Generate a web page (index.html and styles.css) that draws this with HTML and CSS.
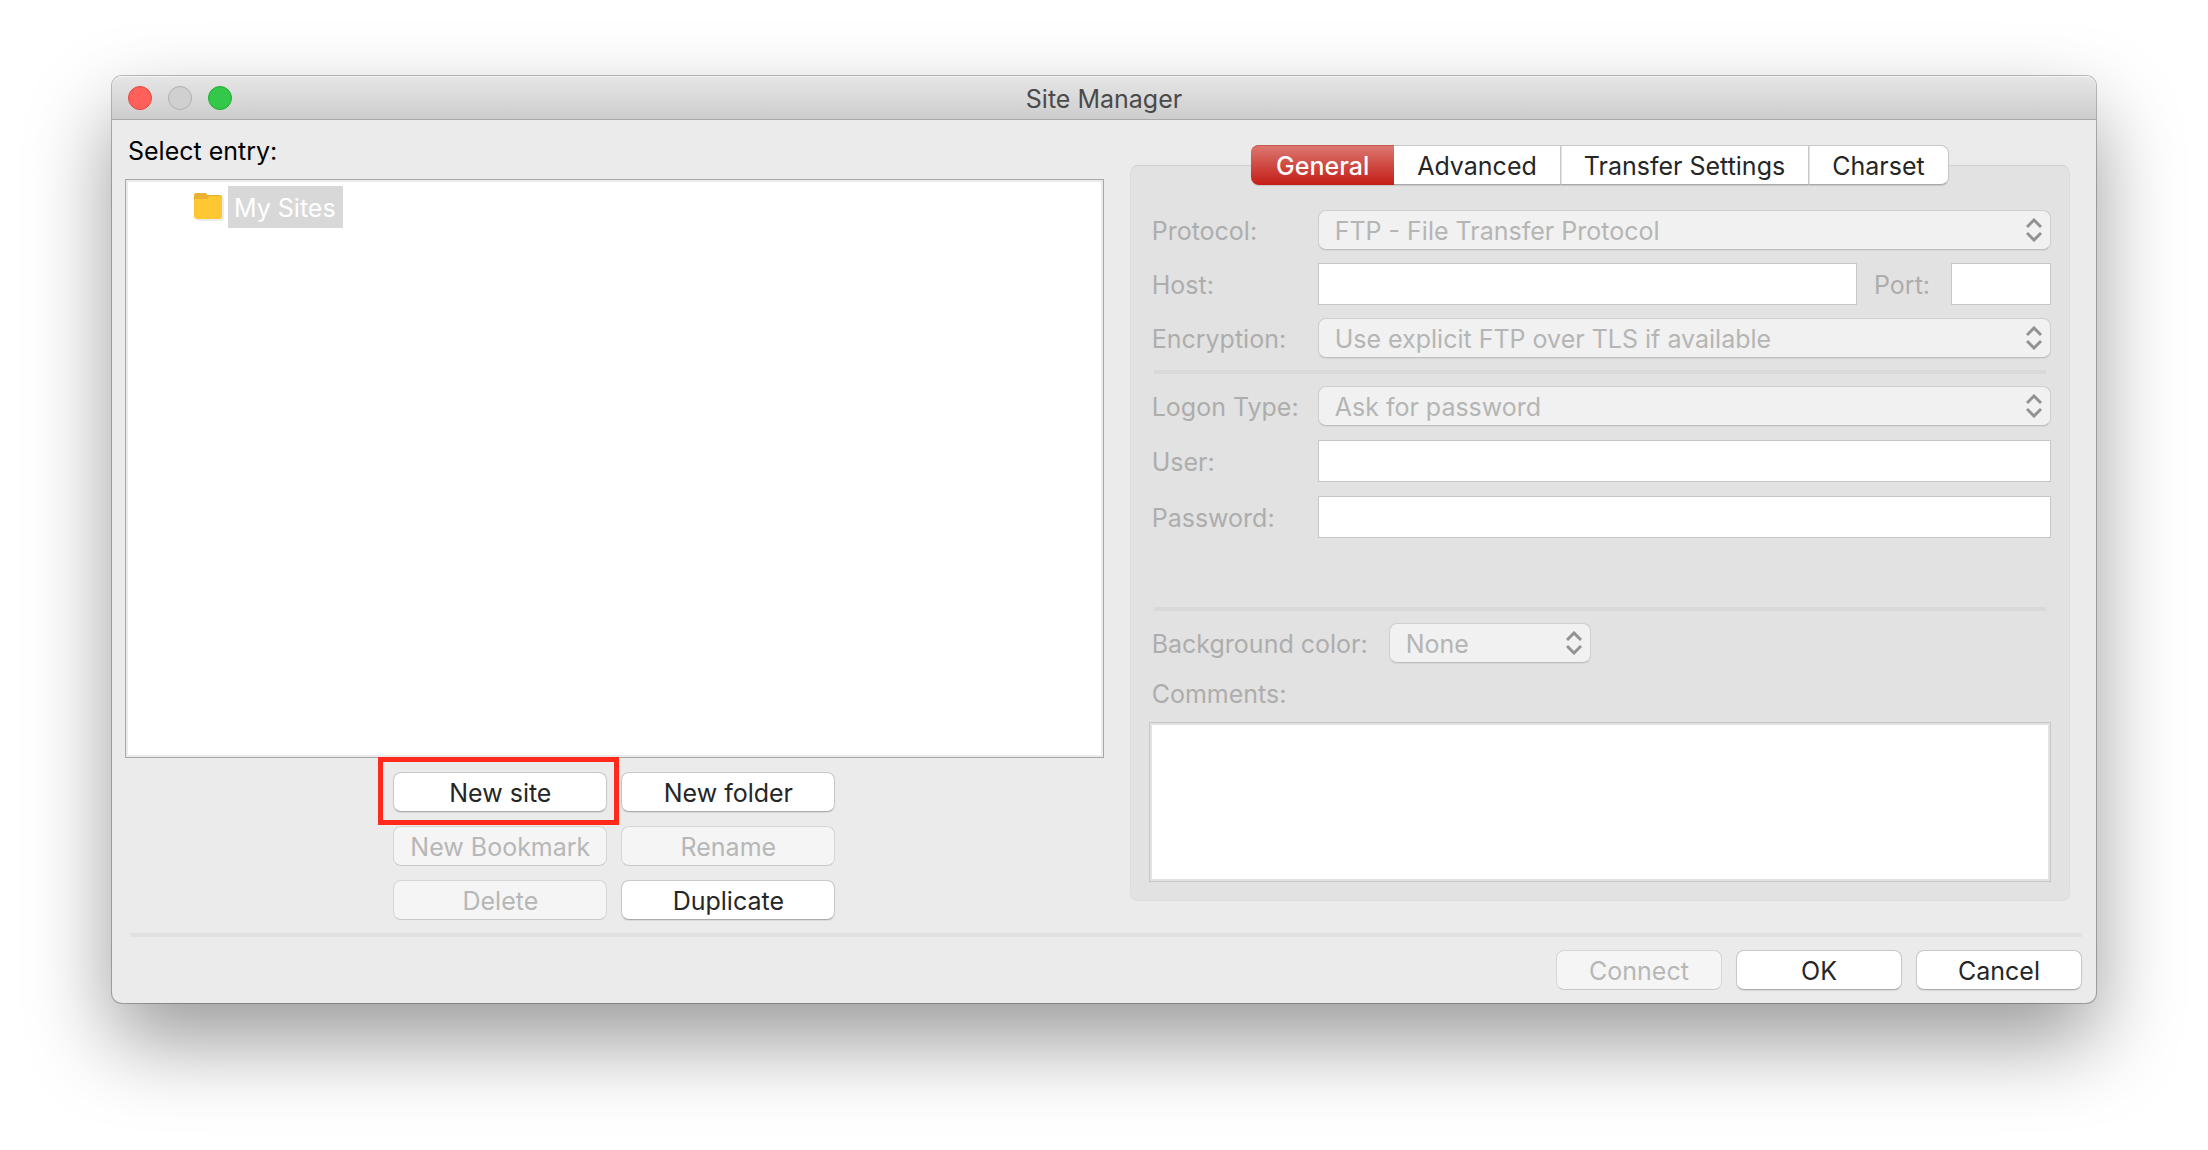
FILE: index.html
```html
<!DOCTYPE html>
<html lang="en">

<head>
    <meta charset="utf-8" />
    <title>Site Manager</title>
    <link rel="stylesheet" href="styles.css">
</head>

<body>
    <div class="window">
        <header class="titlebar">
            <div class="lights">
                <button type="button" class="light close" aria-label="Close"></button>
                <button type="button" class="light minimize" aria-label="Minimize" disabled></button>
                <button type="button" class="light zoom" aria-label="Zoom"></button>
            </div>
            <h1>Site Manager</h1>
        </header>

        <main class="content">
            <section class="entries">
                <h2 id="entries-label">Select entry:</h2>
                <ul class="tree" aria-labelledby="entries-label">
                    <li>
                        <svg class="folder" width="30" height="28" viewBox="0 0 30 28" aria-hidden="true">
                            <path d="M3 4h26a1 1 0 0 1 1 1v20a3 3 0 0 1-3 3H4a2 2 0 0 1-2-2z" fill="#ececec" />
                            <path d="M0 2a2 2 0 0 1 2-2h9a2 2 0 0 1 2 2h13a2 2 0 0 1 2 2v8H0z" fill="#e9b12f" />
                            <path d="M0 8a2 2 0 0 1 2-2h11l3-3h10a2 2 0 0 1 2 2v18a3 3 0 0 1-3 3H3a3 3 0 0 1-3-3z" fill="#ffc832" />
                        </svg>
                        <span class="selected">My Sites</span>
                    </li>
                </ul>
                <div class="actions">
                    <div class="marked">
                        <button type="button" class="btn">New site</button>
                    </div>
                    <button type="button" class="btn">New folder</button>
                    <button type="button" class="btn" disabled>New Bookmark</button>
                    <button type="button" class="btn" disabled>Rename</button>
                    <button type="button" class="btn" disabled>Delete</button>
                    <button type="button" class="btn">Duplicate</button>
                </div>
            </section>

            <section class="settings">
                <div class="tabs" role="tablist">
                    <button type="button" class="tab active" role="tab" aria-selected="true">General</button>
                    <button type="button" class="tab" role="tab" aria-selected="false">Advanced</button>
                    <button type="button" class="tab" role="tab" aria-selected="false">Transfer Settings</button>
                    <button type="button" class="tab" role="tab" aria-selected="false">Charset</button>
                </div>

                <form class="panel">
                    <div class="group">
                        <div class="row">
                            <label for="protocol">Protocol:</label>
                            <div class="select">
                                <select id="protocol" disabled>
                                    <option>FTP - File Transfer Protocol</option>
                                </select>
                                <svg class="arrows" width="16" height="24" viewBox="0 0 16 24" aria-hidden="true">
                                    <path d="M1 9L8 2l7 7M1 15L8 22l7-7" />
                                </svg>
                            </div>
                        </div>
                        <div class="row">
                            <label for="host">Host:</label>
                            <input type="text" id="host" disabled>
                            <label for="port" class="port-label">Port:</label>
                            <input type="text" id="port" class="port" disabled>
                        </div>
                        <div class="row">
                            <label for="encryption">Encryption:</label>
                            <div class="select">
                                <select id="encryption" disabled>
                                    <option>Use explicit FTP over TLS if available</option>
                                </select>
                                <svg class="arrows" width="16" height="24" viewBox="0 0 16 24" aria-hidden="true">
                                    <path d="M1 9L8 2l7 7M1 15L8 22l7-7" />
                                </svg>
                            </div>
                        </div>
                    </div>

                    <hr>

                    <div class="group logon">
                        <div class="row">
                            <label for="logon">Logon Type:</label>
                            <div class="select">
                                <select id="logon" disabled>
                                    <option>Ask for password</option>
                                </select>
                                <svg class="arrows" width="16" height="24" viewBox="0 0 16 24" aria-hidden="true">
                                    <path d="M1 9L8 2l7 7M1 15L8 22l7-7" />
                                </svg>
                            </div>
                        </div>
                        <div class="row">
                            <label for="user">User:</label>
                            <input type="text" id="user" disabled>
                        </div>
                        <div class="row">
                            <label for="password">Password:</label>
                            <input type="password" id="password" disabled>
                        </div>
                    </div>

                    <hr>

                    <div class="row color">
                        <label for="color">Background color:</label>
                        <div class="select">
                            <select id="color" disabled>
                                <option>None</option>
                            </select>
                            <svg class="arrows" width="16" height="24" viewBox="0 0 16 24" aria-hidden="true">
                                <path d="M1 9L8 2l7 7M1 15L8 22l7-7" />
                            </svg>
                        </div>
                    </div>
                    <div class="comments">
                        <label for="comments">Comments:</label>
                        <textarea id="comments" disabled></textarea>
                    </div>
                </form>
            </section>
        </main>

        <footer class="footer">
            <button type="button" class="btn" disabled>Connect</button>
            <button type="button" class="btn">OK</button>
            <button type="button" class="btn">Cancel</button>
        </footer>
    </div>
</body>

</html>
```
FILE: styles.css
```css
* {
    box-sizing: border-box;
    margin: 0;
    padding: 0;
}

body {
    min-height: 100vh;
    padding: 76px 112px;
    background: #fff;
    color: #000;
    font-family: Inter, "Liberation Sans", sans-serif;
    font-size: 25px;
    line-height: 30px;
}

button,
input,
select,
textarea {
    font: inherit;
}

h1,
h2 {
    font-size: 25px;
    font-weight: 400;
}

/* window */

.window {
    border-radius: 10px;
    background: #ebebeb;
    box-shadow: 0 0 0 1px rgba(0, 0, 0, 0.25), 0 38px 84px rgba(0, 0, 0, 0.4);
}

.titlebar {
    position: relative;
    display: flex;
    align-items: center;
    justify-content: center;
    height: 44px;
    padding-top: 2px;
    border-bottom: 1px solid #a9a9a9;
    border-radius: 10px 10px 0 0;
    background: linear-gradient(#e6e6e6, #cdcdcd);
    box-shadow: inset 0 1px 0 #f4f4f4;
    color: #4a4a4a;
}

.lights {
    position: absolute;
    top: 10px;
    left: 16px;
    display: flex;
    gap: 16px;
}

.light {
    width: 24px;
    height: 24px;
    border: 1px solid;
    border-radius: 50%;
}

.close {
    border-color: #e2463f;
    background: #ff605a;
}

.minimize {
    border-color: #b0b0b0;
    background: #d0d0d0;
}

.zoom {
    border-color: #1fad30;
    background: #34c84a;
}

.content {
    display: grid;
    grid-template-columns: 51fr 49fr;
    gap: 26px;
    padding: 0 26px 0 13px;
}

/* entry tree */

.entries {
    display: flex;
    flex-direction: column;
    padding-top: 16px;
}

.entries h2 {
    padding-left: 3px;
    margin-bottom: 13px;
}

.tree {
    flex: 1;
    min-height: 579px;
    padding: 4px 64px;
    border: 1px solid #a8a8a8;
    box-shadow: inset 0 0 0 2px #ebebeb;
    background: #fff;
    list-style: none;
}

.tree li {
    display: flex;
    align-items: center;
    gap: 4px;
    padding: 2px 4px;
}

.selected {
    padding: 7px 7px 5px 6px;
    background: #d8d8d8;
    color: #fff;
}

.actions {
    display: grid;
    grid-template-columns: 214px 214px;
    gap: 14px;
    justify-content: center;
    padding: 14px 0 13px;
}

/* buttons */

.btn {
    width: 100%;
    height: 40px;
    padding-top: 2px;
    border: 1px solid #c8c8c8;
    border-bottom-color: #adadad;
    border-radius: 8px;
    background: #fff;
    box-shadow: 0 1px 1px rgba(0, 0, 0, 0.08);
    color: #262626;
}

.btn:disabled {
    border-color: #d6d6d6;
    border-bottom-color: #c8c8c8;
    background: #f5f5f5;
    box-shadow: none;
    color: #b7b7b7;
}

/* red frame round the New site button */

.marked {
    position: relative;
}

.marked::after {
    content: "";
    position: absolute;
    inset: -15px -12px -13px -15px;
    border: 5px solid #ff2a1c;
    pointer-events: none;
}

/* tabs */

.settings {
    display: flex;
    flex-direction: column;
    padding-top: 25px;
}

.tabs {
    position: relative;
    z-index: 1;
    display: flex;
    align-self: center;
    height: 40px;
    margin-bottom: -20px;
    border-radius: 8px;
    box-shadow: 0 1px 1px rgba(0, 0, 0, 0.12);
}

.tab {
    padding: 1px 23px 0;
    border: 1px solid #c8c8c8;
    border-bottom-color: #a8a8a8;
    border-left: 0;
    background: #fff;
    color: #262626;
}

.tab + .tab + .tab {
    box-shadow: inset 1px 0 0 #e2e2e2;
}

.tab:last-child {
    border-radius: 0 8px 8px 0;
}

.tab.active {
    padding: 1px 25px 0;
    border: 0;
    border-radius: 8px 0 0 8px;
    background: linear-gradient(#dd7b73, #cf4a43 50%, #c51d17);
    box-shadow: inset 0 1px 0 #c9564f;
    color: #fff;
    font-weight: 500;
}

/* settings panel */

.panel {
    padding: 44px 18px 18px;
    border: 1px solid #dcdcdc;
    border-top-color: #d0d0d0;
    border-radius: 8px;
    background: #e2e2e2;
    color: #adadad;
}

.group {
    display: flex;
    flex-direction: column;
    gap: 13px;
}

.logon {
    gap: 14px;
    margin-bottom: 69px;
}

.row {
    display: flex;
    align-items: center;
}

.row label {
    width: 169px;
    padding: 2px 0 0 3px;
    white-space: nowrap;
}

.row .port-label {
    width: 94px;
    padding-left: 17px;
}

.panel input {
    flex: 1;
    min-width: 0;
    height: 42px;
    padding: 0 8px;
    border: 1px solid #c6c6c6;
    background: #fff;
}

.panel .port {
    flex: 0 0 100px;
}

.select {
    position: relative;
    flex: 1;
}

.select select {
    display: block;
    width: 100%;
    height: 40px;
    padding: 2px 40px 0 16px;
    border: 1px solid #cfcfcf;
    border-bottom-color: #bfbfbf;
    border-radius: 8px;
    background: #f1f1f1;
    box-shadow: 0 1px 1px rgba(0, 0, 0, 0.06);
    color: #b5b5b5;
    opacity: 1;
    appearance: none;
}

.arrows {
    position: absolute;
    top: 8px;
    right: 9px;
    fill: none;
    stroke: #929292;
    stroke-width: 3;
    pointer-events: none;
}

.panel hr {
    height: 4px;
    margin: 12px 5px;
    border: 0;
    background: #d9d9d9;
}

.color label {
    width: 240px;
}

.color .select {
    flex: 0 0 202px;
}

.comments {
    display: flex;
    flex-direction: column;
    gap: 13px;
    padding-top: 16px;
}

.comments label {
    padding-left: 3px;
}

.comments textarea {
    height: 160px;
    border: 1px solid #c6c6c6;
    box-shadow: inset 0 0 0 2px #e2e2e2;
    background: #fff;
    resize: none;
}

/* footer */

.footer {
    display: flex;
    justify-content: flex-end;
    gap: 14px;
    margin: 0 14px 0 18px;
    padding: 13px 0;
    border-top: 4px solid #e1e1e1;
}

.footer .btn {
    width: 166px;
}
```
